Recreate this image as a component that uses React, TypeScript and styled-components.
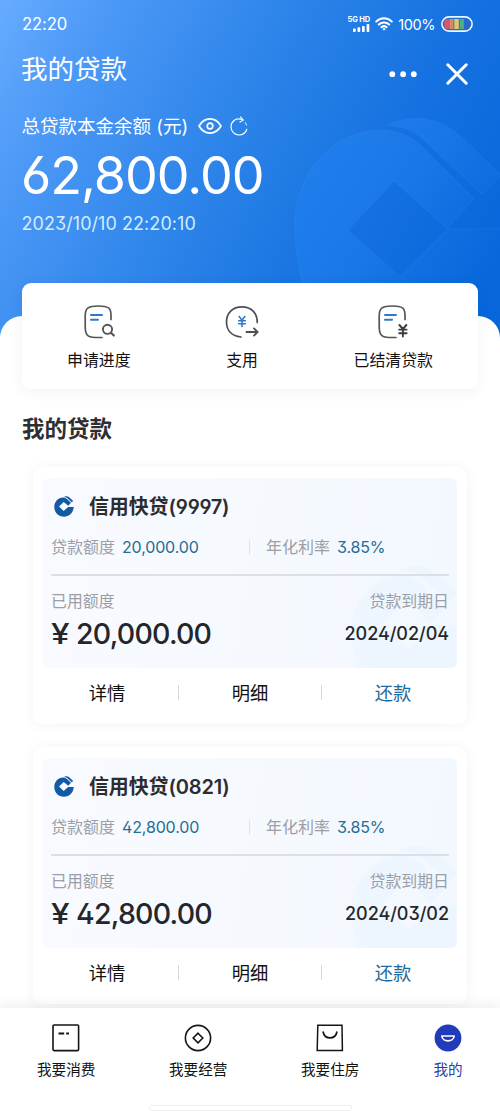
import React from "react";
import styled, { createGlobalStyle } from "styled-components";

const Global = createGlobalStyle`
  * { box-sizing: border-box; }
  body {
    margin: 0;
    background: #fff;
    font-family: Inter, "Noto Sans CJK SC", sans-serif;
    font-feature-settings: "ss01" 1;
    color: #111;
  }
`;

const Page = styled.div`
  position: relative;
  width: 500px;
  height: 1111px;
  overflow: hidden;
  display: flex;
  flex-direction: column;
  background: linear-gradient(118deg, #66abff 0%, #4b98f6 17%, #2e85ea 42%, #1672e0 68%, #0463d9 100%) no-repeat 0 0 / 500px 350px #fff;
`;

const Watermark = styled.svg`
  position: absolute;
  left: 280px;
  top: 105px;
`;

const Hero = styled.header`
  position: relative;
  flex: none;
  height: 316px;
  padding: 0 22px;
  color: #fff;
`;

const StatusBar = styled.div`
  height: 48px;
  display: flex;
  align-items: center;
  justify-content: space-between;
  padding-right: 5px;
`;

const Clock = styled.span`
  font-size: 16.6px;
  font-weight: 400;
  letter-spacing: -0.1px;
`;

const StatusIcons = styled.div`
  display: flex;
  align-items: center;
`;

const Percent = styled.span`
  font-size: 14.5px;
  margin: 0 6px 0 5px;
  letter-spacing: -0.4px;
`;

const Signal = styled.div`
  display: flex;
  flex-direction: column;
  align-items: flex-end;
  font-size: 7.5px;
  line-height: 8px;
  font-weight: 700;
  letter-spacing: -0.1px;
  margin-right: 5px;
`;

const TitleBar = styled.div`
  height: 42px;
  display: flex;
  align-items: center;
  justify-content: space-between;
  padding-right: 10px;
`;

const Title = styled.h1`
  margin: 0 0 0 -1px;
  font-size: 26.5px;
  line-height: 42px;
  font-weight: 400;
`;

const WindowButtons = styled.div`
  display: flex;
  align-items: center;
  gap: 29px;
  padding-top: 10px;
`;

const BalanceLabel = styled.div`
  height: 34px;
  margin: 19px 0 0 -0.5px;
  display: flex;
  align-items: center;
  font-size: 18.5px;
  line-height: 34px;
`;

const Balance = styled.div`
  height: 66px;
  line-height: 66px;
  font-size: 52px;
  font-weight: 400;
  letter-spacing: -1px;
  margin-left: -1px;
`;

const Stamp = styled.div`
  height: 28px;
  line-height: 29px;
  font-size: 18px;
  font-weight: 400;
  letter-spacing: 0.06px;
  color: #d3ecff;
  margin-left: -0.5px;
`;

const Sheet = styled.main`
  position: relative;
  flex: 1;
  min-height: 0;
  background: #fff;
  border-radius: 22px 22px 0 0;
`;

const QuickCard = styled.section`
  height: 106px;
  margin: -33px 22px 0;
  padding: 21px 45px 0;
  border-radius: 9px;
  background: #fff;
  box-shadow: 0 3px 14px rgba(40, 50, 70, 0.06);
  display: flex;
  justify-content: space-between;
`;

const QuickItem = styled.div`
  display: flex;
  flex-direction: column;
  align-items: center;
  font-size: 15.9px;
  line-height: 24px;
  gap: 9px;
`;

const SectionTitle = styled.h2`
  margin: 20px 22px 0;
  font-size: 22.5px;
  line-height: 40px;
  font-weight: 700;
  color: #2e2f33;
`;

const List = styled.div`
  display: flex;
  flex-direction: column;
  gap: 23px;
  margin: 18px 33px 0;
`;

const LoanCard = styled.article`
  height: 257px;
  padding: 11px 10px 0;
  border-radius: 9px;
  background: #fff;
  box-shadow: 0 1px 12px rgba(40, 50, 70, 0.06);
`;

const LoanPanel = styled.div`
  position: relative;
  height: 190px;
  padding: 8px 8px 0;
  border-radius: 6px;
  background: linear-gradient(100deg, #f8faff, #f5f9fe 60%, #f2f8fe);
  overflow: hidden;
`;

const PanelMark = styled.svg`
  position: absolute;
  right: -2px;
  bottom: 0;
`;

const LoanHead = styled.div`
  height: 41px;
  display: flex;
  align-items: center;
  gap: 15px;
  padding-left: 3px;
`;

const LoanName = styled.h3`
  margin: 0;
  font-size: 20px;
  line-height: 40px;
  font-weight: 600;
  letter-spacing: -0.15px;
  color: #2c2d31;
`;

const Terms = styled.div`
  height: 40px;
  display: flex;
  align-items: center;
  font-size: 16px;
  line-height: 24px;
  color: #9b9ea6;
`;

const Limit = styled.div`
  width: 199px;
  height: 15px;
  display: flex;
  align-items: center;
  gap: 7px;
  border-right: 1px solid #dfe2e7;
  margin-right: 16px;
`;

const Rate = styled.div`
  display: flex;
  align-items: center;
  gap: 7px;
`;

const Blue = styled.span`
  color: #246d94;
  letter-spacing: -0.15px;
`;

const Usage = styled.div`
  position: relative;
  margin-top: 7px;
  border-top: 2px solid #dcdfe3;
  padding-top: 13px;
  display: flex;
  justify-content: space-between;
`;

const UsageCol = styled.div<{ $end?: boolean }>`
  display: flex;
  flex-direction: column;
  align-items: ${(p) => (p.$end ? "flex-end" : "flex-start")};
  color: #24262b;
`;

const Muted = styled.span`
  font-size: 15.9px;
  line-height: 26px;
  color: #9b9ea6;
`;

const Used = styled.span`
  font-size: 28.5px;
  line-height: 38px;
  font-weight: 500;
  letter-spacing: -0.77px;
`;

const Yen = styled.span`
  display: inline-block;
  width: 25px;
  transform: scaleX(1.17);
  transform-origin: 0 50%;
`;

const Due = styled.span`
  font-size: 18px;
  line-height: 38px;
  font-weight: 500;
  letter-spacing: -0.03px;
`;

const Actions = styled.div`
  height: 49px;
  margin: 0 -7px;
  display: flex;
  align-items: center;
`;

const Action = styled.div<{ $primary?: boolean }>`
  flex: 1;
  text-align: center;
  font-size: 18.3px;
  line-height: 28px;
  color: ${(p) => (p.$primary ? "#22699b" : "#111")};
`;

const Bar = styled.i`
  width: 1px;
  height: 15px;
  background: #d9d9dc;
`;

const Nav = styled.nav`
  position: relative;
  flex: none;
  height: 103px;
  background: #fff;
  box-shadow: 0 -3px 12px rgba(40, 40, 40, 0.08);
  display: flex;
  flex-direction: column;
  align-items: center;
`;

const Tabs = styled.div`
  width: 100%;
  height: 97px;
  padding: 0 37px;
  display: flex;
  justify-content: space-between;
`;

const Tab = styled.div<{ $on?: boolean }>`
  padding-top: 15px;
  display: flex;
  flex-direction: column;
  align-items: center;
  gap: 5px;
  font-size: 14.6px;
  line-height: 24px;
  color: ${(p) => (p.$on ? "#2c419c" : "#111")};
`;

const HomePill = styled.div`
  width: 203px;
  height: 6px;
  border: 1.5px solid #eeeeee;
  border-radius: 4px;
  flex: none;
`;

const EyeIcon = styled.svg`
  margin-left: 10px;
`;

const RefreshIcon = styled.svg`
  margin-left: 8px;
`;

const BankLogo = () => (
  <svg width="20" height="21" viewBox="0 0 20 21" fill="#145aa3">
    <path d="M9.2 1.4 C11 1.4 12.1 2 13 2.9 L17 6.7 L14.2 9.8 L9.7 5.9 L5 10.5 L9.7 15.1 L14.1 10.9 H19.7 C19.5 16.5 15.4 20.7 9.9 20.7 C4.4 20.7 .3 16.4 .3 10.9 C.3 5.6 4.1 1.4 9.2 1.4Z" />
    <path d="M10.2 .7 C12.3 -.1 14 .3 15.4 1.6 L19.2 5 L17.7 6.2 L13.5 2.3 C12.6 1.4 11.5 .9 10.2 .7Z" />
  </svg>
);

const loans = [
  { no: "9997", limit: "20,000.00", due: "2024/02/04" },
  { no: "0821", limit: "42,800.00", due: "2024/03/02" },
];

const DocOutline = () => (
  <>
    <path d="M28 15.5 V11 C28 4 25.5 2 15.5 2 C4.5 2 2.2 4.5 2.2 12 V22 C2.2 31 4.5 33.3 12 33.5 H19" stroke="#55565a" strokeWidth="1.7" />
    <path d="M8 11 H19 M8 15.7 H15" stroke="#2f78d0" strokeWidth="2" />
  </>
);

export default function App() {
  return (
    <Page>
      <Global />
      <Watermark width="220" height="240" viewBox="280 105 220 240">
        <defs>
          <linearGradient id="wm" gradientUnits="userSpaceOnUse" x1="310" y1="150" x2="490" y2="270">
            <stop offset="0" stopColor="#217fee" stopOpacity=".9" />
            <stop offset=".5" stopColor="#1a79e8" stopOpacity=".8" />
            <stop offset="1" stopColor="#0868dc" stopOpacity=".5" />
          </linearGradient>
        </defs>
        <g fill="url(#wm)" stroke="#3b91f2" strokeOpacity=".22" strokeWidth="1">
          <path d="M380 130 C395 130 408 135 418 143 L474 199 L447 228 L394 181 L348 230 L400 277 L448 229 H501 V345 H340 C310 325 295 275 295 225 C295 172 335 130 380 130Z" />
          <path d="M387 125 C414 113 440 118 460 136 L501 175 L482 194 L424 140 C414 130 402 126 387 125Z" />
        </g>
      </Watermark>
      <Hero>
        <StatusBar>
          <Clock>22:20</Clock>
          <StatusIcons>
            <Signal>
              <span>5G HD</span>
              <svg width="17" height="8" viewBox="0 0 17 8" fill="#fff">
                <rect x="0" y="4.5" width="2.7" height="3.5" rx=".7" />
                <rect x="4.5" y="3.3" width="2.7" height="4.7" rx=".7" />
                <rect x="9" y="2" width="2.7" height="6" rx=".7" />
                <rect x="13.6" y="0" width="2.7" height="8" rx=".7" />
              </svg>
            </Signal>
            <svg width="18" height="14" viewBox="0 0 18 14" fill="none" stroke="#fff" strokeWidth="2" strokeLinecap="round">
              <path d="M1.2 4.6 C5.6 .2 12.4 .2 16.8 4.6 M3.8 7.5 C6.8 4.7 11.2 4.7 14.2 7.5 M6.4 10.2 C8 8.9 10 8.9 11.6 10.2" />
              <circle cx="9" cy="12.2" r=".8" fill="#fff" strokeWidth="1" />
            </svg>
            <Percent>100%</Percent>
            <svg width="32" height="16" viewBox="0 0 32 16">
              <rect x="3.3" y="3" width="5" height="10" rx="2" fill="#d9566c" />
              <rect x="8.5" y="3" width="4" height="10" fill="#d98a5d" />
              <rect x="13.3" y="3" width="4.5" height="10" fill="#eac461" />
              <rect x="18.8" y="3" width="4" height="10" fill="#4fae83" />
              <path d="M23.8 3 H26 Q28.6 4.5 28.6 8 T26 13 H23.8Z" fill="#3565bd" />
              <rect x=".9" y=".9" width="30.2" height="14.2" rx="7.1" fill="none" stroke="#eef5ff" strokeWidth="1.6" />
            </svg>
          </StatusIcons>
        </StatusBar>
        <TitleBar>
          <Title>我的贷款</Title>
          <WindowButtons>
            <svg width="28" height="8" viewBox="0 0 28 8" fill="#fff">
              <circle cx="3.3" cy="4.2" r="2.9" />
              <circle cx="14.1" cy="4.2" r="2.9" />
              <circle cx="24.8" cy="4.2" r="2.9" />
            </svg>
            <svg width="22" height="22" viewBox="0 0 22 22" fill="none" stroke="#fff" strokeWidth="3" strokeLinecap="round">
              <path d="M1.8 1.8 L20.2 20.2 M20.2 1.8 L1.8 20.2" />
            </svg>
          </WindowButtons>
        </TitleBar>
        <BalanceLabel>
          <span>总贷款本金余额 (元)</span>
          <EyeIcon width="24" height="18" viewBox="0 0 24 18" fill="none" stroke="#fff" strokeWidth="1.7">
            <path d="M1 9 C6.5 -.4 17.5 -.4 23 9 C17.5 18.4 6.5 18.4 1 9Z" strokeLinejoin="round" />
            <circle cx="12" cy="9" r="2.8" />
          </EyeIcon>
          <RefreshIcon width="18" height="20" viewBox="0 0 18 20" fill="none" stroke="#fff" strokeWidth="1.2">
            <path d="M11.8 3.5 C5.5 1 1 6 1 10.8 C1 15.5 4.7 19 9 19 C13 19 16.2 16.2 16.9 12.8" />
            <path d="M10.2 .6 L13.2 4.2 L9.6 6.3" />
            <path d="M15.2 6.2 L16.7 9.6" strokeOpacity=".65" />
          </RefreshIcon>
        </BalanceLabel>
        <Balance>62,800.00</Balance>
        <Stamp>2023/10/10 22:20:10</Stamp>
      </Hero>
      <Sheet>
        <QuickCard>
          <QuickItem>
            <svg width="32" height="36" viewBox="0 0 32 36" fill="none" strokeLinecap="round">
              <DocOutline />
              <circle cx="24.5" cy="25.3" r="4.6" stroke="#55565a" strokeWidth="1.9" />
              <path d="M28 28.8 L30.8 31.5" stroke="#55565a" strokeWidth="2.2" />
            </svg>
            申请进度
          </QuickItem>
          <QuickItem>
            <svg width="34" height="36" viewBox="0 0 34 36" fill="none" strokeLinecap="round">
              <path d="M32.3 18.5 C32.3 9 26.5 2.8 17 2.8 C7.5 2.8 1.5 9 1.5 18 C1.5 26.5 7 32 16 33" stroke="#4c4f54" strokeWidth="1.7" />
              <path d="M21.5 28 H32.5 M29 24.4 L32.6 28 L29 31.6" stroke="#4c4f54" strokeWidth="1.9" />
              <path d="M14.2 12.5 L17 16.2 L19.8 12.5 M17 16.2 V22.5 M13.7 16.7 H20.3 M13.7 19.7 H20.3" stroke="#2f78d0" strokeWidth="1.6" />
            </svg>
            支用
          </QuickItem>
          <QuickItem>
            <svg width="32" height="36" viewBox="0 0 32 36" fill="none" strokeLinecap="round">
              <DocOutline />
              <path d="M22.4 21 L25.9 25 L29.4 21 M25.9 25 V32.5 M22.2 25.6 H29.6 M22.2 29.2 H29.6" stroke="#3c3d40" strokeWidth="1.9" />
            </svg>
            已结清贷款
          </QuickItem>
        </QuickCard>
        <SectionTitle>我的贷款</SectionTitle>
        <List>
          {loans.map((l) => (
            <LoanCard key={l.no}>
              <LoanPanel>
                <PanelMark width="110" height="106" viewBox="0 0 110 106" fill="#e8f3fd" fillOpacity=".5">
                  <path d="M50 14 Q62 12 72 22 L96 46 L82 60 L58 37 L34 62 L60 88 L84 63 H110 V106 H10 C-8 65 8 20 50 14Z" />
                  <path d="M50 8 Q72 -2 90 14 L108 31 L100 40 L76 18 Q66 8 50 8Z" />
                </PanelMark>
                <LoanHead>
                  <BankLogo />
                  <LoanName>信用快贷({l.no})</LoanName>
                </LoanHead>
                <Terms>
                  <Limit>
                    贷款额度 <Blue>{l.limit}</Blue>
                  </Limit>
                  <Rate>
                    年化利率 <Blue>3.85%</Blue>
                  </Rate>
                </Terms>
                <Usage>
                  <UsageCol>
                    <Muted>已用额度</Muted>
                    <Used>
                      <Yen>¥</Yen>
                      {l.limit}
                    </Used>
                  </UsageCol>
                  <UsageCol $end>
                    <Muted>贷款到期日</Muted>
                    <Due>{l.due}</Due>
                  </UsageCol>
                </Usage>
              </LoanPanel>
              <Actions>
                <Action>详情</Action>
                <Bar />
                <Action>明细</Action>
                <Bar />
                <Action $primary>还款</Action>
              </Actions>
            </LoanCard>
          ))}
        </List>
      </Sheet>
      <Nav>
        <Tabs>
          <Tab>
            <svg width="30" height="30" viewBox="0 0 30 30" fill="none" stroke="#151515" strokeWidth="1.6">
              <rect x="2" y="2" width="25.6" height="25.6" rx="1" />
              <path d="M7.5 10.5 H13.2 M15.2 10.5 H18" strokeWidth="1.9" />
            </svg>
            我要消费
          </Tab>
          <Tab>
            <svg width="30" height="30" viewBox="0 0 30 30" fill="none" stroke="#151515" strokeWidth="1.6">
              <circle cx="15" cy="15" r="12.6" />
              <path d="M15 10.2 L19.8 15 L15 19.8 L10.2 15Z" />
            </svg>
            我要经营
          </Tab>
          <Tab>
            <svg width="30" height="30" viewBox="0 0 30 30" fill="none" stroke="#151515" strokeWidth="1.5">
              <path d="M2.8 2.2 H27 L27.4 27.6 H2.2Z" />
              <path d="M8 8.5 C9.5 17 20.5 17 22 8.5" strokeWidth="1.7" />
            </svg>
            我要住房
          </Tab>
          <Tab $on>
            <svg width="30" height="30" viewBox="0 0 30 30" fill="none">
              <circle cx="15" cy="15" r="13.4" fill="#203cba" />
              <path d="M8.8 13 H21.2 C20.8 19.5 9.2 19.5 8.8 13Z" stroke="#fff" strokeWidth="1.6" strokeLinejoin="round" />
            </svg>
            我的
          </Tab>
        </Tabs>
        <HomePill />
      </Nav>
    </Page>
  );
}
